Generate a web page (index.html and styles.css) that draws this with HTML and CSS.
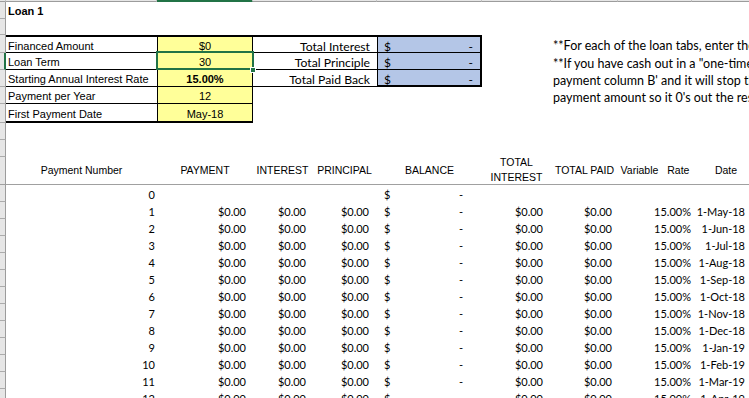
FILE: index.html
```html
<!DOCTYPE html>
<html>
<head>
<meta charset="utf-8">
<title>Loan 1</title>
<link rel="stylesheet" href="styles.css">
</head>
<body>
<div class="sheet">
  <div class="row colhead">
    <div class="hc"></div><div class="hc"></div><div class="hc sel"></div><div class="hc"></div><div class="hc"></div><div class="hc"></div><div class="hc"></div><div class="hc"></div><div class="hc"></div><div class="hc"></div>
  </div>

  <div class="row">
    <div class="rh"></div><div class="c lbl bold title">Loan 1</div>
  </div>
  <div class="row h16">
    <div class="rh"></div>
  </div>

  <div class="row h18 box-top">
    <div class="rh"></div>
    <div class="c lbl bt bb">Financed Amount</div>
    <div class="c yel bt bb">$0</div>
    <div class="c tlbl bt bb">Total Interest</div>
    <div class="c blue acc-t bt bb"><span>$</span><span>-</span></div>
    <div></div>
    <div class="c note">**For each of the loan tabs, enter the</div>
  </div>
  <div class="row">
    <div class="rh act"></div>
    <div class="c lbl bb">Loan Term</div>
    <div class="c yel bb selcell">30<span class="selbox"></span><span class="handle"></span></div>
    <div class="c tlbl bb">Total Principle</div>
    <div class="c blue acc-t bb"><span>$</span><span>-</span></div>
    <div></div>
    <div class="c note">**If you have cash out in a "one-time"</div>
  </div>
  <div class="row">
    <div class="rh"></div>
    <div class="c lbl bb">Starting Annual Interest Rate</div>
    <div class="c yel bb bold">15.00%</div>
    <div class="c tlbl bb">Total Paid Back</div>
    <div class="c blue acc-t bb2"><span>$</span><span>-</span></div>
    <div></div>
    <div class="c note">payment column B' and it will stop the</div>
  </div>
  <div class="row">
    <div class="rh"></div>
    <div class="c lbl bb">Payment per Year</div>
    <div class="c yel bb">12</div>
    <div></div><div></div><div></div>
    <div class="c note">payment amount so it 0's out the rest</div>
  </div>
  <div class="row h19">
    <div class="rh"></div>
    <div class="c lbl bb2">First Payment Date</div>
    <div class="c yel bb2">May-18</div>
  </div>
  <div class="row"><div class="rh"></div></div>
  <div class="row"><div class="rh"></div></div>

  <div class="row h28 hdr">
    <div class="rh"></div>
    <div class="hd">Payment Number</div>
    <div class="hd">PAYMENT</div>
    <div class="hd">INTEREST</div>
    <div class="hd">PRINCIPAL</div>
    <div class="hd">BALANCE</div>
    <div class="hd two">TOTAL<br>INTEREST</div>
    <div class="hd">TOTAL PAID</div>
    <div class="hd var">Variable Rate</div>
    <div class="hd">Date</div>
  </div>

  <div class="row"><div class="rh"></div><div class="c d num">0</div><div></div><div></div><div></div><div class="c d acc"><span>$</span><span>-</span></div></div>
  <div class="row"><div class="rh"></div><div class="c d num">1</div><div class="c d pb">$0.00</div><div class="c d pc">$0.00</div><div class="c d pd">$0.00</div><div class="c d acc"><span>$</span><span>-</span></div><div class="c d pf">$0.00</div><div class="c d pg">$0.00</div><div class="c d ph">15.00%</div><div class="c d pi">1-May-18</div></div>
  <div class="row"><div class="rh"></div><div class="c d num">2</div><div class="c d pb">$0.00</div><div class="c d pc">$0.00</div><div class="c d pd">$0.00</div><div class="c d acc"><span>$</span><span>-</span></div><div class="c d pf">$0.00</div><div class="c d pg">$0.00</div><div class="c d ph">15.00%</div><div class="c d pi">1-Jun-18</div></div>
  <div class="row"><div class="rh"></div><div class="c d num">3</div><div class="c d pb">$0.00</div><div class="c d pc">$0.00</div><div class="c d pd">$0.00</div><div class="c d acc"><span>$</span><span>-</span></div><div class="c d pf">$0.00</div><div class="c d pg">$0.00</div><div class="c d ph">15.00%</div><div class="c d pi">1-Jul-18</div></div>
  <div class="row"><div class="rh"></div><div class="c d num">4</div><div class="c d pb">$0.00</div><div class="c d pc">$0.00</div><div class="c d pd">$0.00</div><div class="c d acc"><span>$</span><span>-</span></div><div class="c d pf">$0.00</div><div class="c d pg">$0.00</div><div class="c d ph">15.00%</div><div class="c d pi">1-Aug-18</div></div>
  <div class="row"><div class="rh"></div><div class="c d num">5</div><div class="c d pb">$0.00</div><div class="c d pc">$0.00</div><div class="c d pd">$0.00</div><div class="c d acc"><span>$</span><span>-</span></div><div class="c d pf">$0.00</div><div class="c d pg">$0.00</div><div class="c d ph">15.00%</div><div class="c d pi">1-Sep-18</div></div>
  <div class="row"><div class="rh"></div><div class="c d num">6</div><div class="c d pb">$0.00</div><div class="c d pc">$0.00</div><div class="c d pd">$0.00</div><div class="c d acc"><span>$</span><span>-</span></div><div class="c d pf">$0.00</div><div class="c d pg">$0.00</div><div class="c d ph">15.00%</div><div class="c d pi">1-Oct-18</div></div>
  <div class="row"><div class="rh"></div><div class="c d num">7</div><div class="c d pb">$0.00</div><div class="c d pc">$0.00</div><div class="c d pd">$0.00</div><div class="c d acc"><span>$</span><span>-</span></div><div class="c d pf">$0.00</div><div class="c d pg">$0.00</div><div class="c d ph">15.00%</div><div class="c d pi">1-Nov-18</div></div>
  <div class="row"><div class="rh"></div><div class="c d num">8</div><div class="c d pb">$0.00</div><div class="c d pc">$0.00</div><div class="c d pd">$0.00</div><div class="c d acc"><span>$</span><span>-</span></div><div class="c d pf">$0.00</div><div class="c d pg">$0.00</div><div class="c d ph">15.00%</div><div class="c d pi">1-Dec-18</div></div>
  <div class="row"><div class="rh"></div><div class="c d num">9</div><div class="c d pb">$0.00</div><div class="c d pc">$0.00</div><div class="c d pd">$0.00</div><div class="c d acc"><span>$</span><span>-</span></div><div class="c d pf">$0.00</div><div class="c d pg">$0.00</div><div class="c d ph">15.00%</div><div class="c d pi">1-Jan-19</div></div>
  <div class="row"><div class="rh"></div><div class="c d num">10</div><div class="c d pb">$0.00</div><div class="c d pc">$0.00</div><div class="c d pd">$0.00</div><div class="c d acc"><span>$</span><span>-</span></div><div class="c d pf">$0.00</div><div class="c d pg">$0.00</div><div class="c d ph">15.00%</div><div class="c d pi">1-Feb-19</div></div>
  <div class="row"><div class="rh"></div><div class="c d num">11</div><div class="c d pb">$0.00</div><div class="c d pc">$0.00</div><div class="c d pd">$0.00</div><div class="c d acc"><span>$</span><span>-</span></div><div class="c d pf">$0.00</div><div class="c d pg">$0.00</div><div class="c d ph">15.00%</div><div class="c d pi">1-Mar-19</div></div>
  <div class="row"><div class="rh"></div><div class="c d num">12</div><div class="c d pb">$0.00</div><div class="c d pc">$0.00</div><div class="c d pd">$0.00</div><div class="c d acc"><span>$</span><span>-</span></div><div class="c d pf">$0.00</div><div class="c d pg">$0.00</div><div class="c d ph">15.00%</div><div class="c d pi">1-Apr-19</div></div>
</div>
</body>
</html>
```

FILE: styles.css
```css
* { box-sizing: border-box; margin: 0; padding: 0; }
html, body { width: 749px; height: 398px; overflow: hidden; background: #fff; }
body {
  font-family: "Liberation Sans", Arial, sans-serif;
  font-size: 11px;
  color: #000;
}
.sheet { width: 760px; }

.row {
  display: grid;
  grid-template-columns: 6px 151px 96px 59px 65px 105px 69px 67px 74px 68px;
  grid-template-rows: minmax(0, 1fr);
  height: 17px;
}
.row > div { white-space: nowrap; overflow: hidden; line-height: 17px; min-height: 0; }

.h16 { height: 16px; }
.h18 { height: 18px; }
.h19 { height: 19px; }
.h28 { height: 28px; }

/* column header remnant */
.colhead { height: 2px; }
.colhead .hc {
  background: #e6e6e6;
  border-bottom: 1px solid #9c9c9c;
  border-right: 1px solid #c4c4c4;
}
.colhead .hc.sel { background: #217346; border-bottom-color: #217346; }

/* row header strip */
.rh {
  background: #e6e6e6;
  border-right: 1px solid #9c9c9c;
  border-bottom: 1px solid #ababab;
}
.rh.act { border-right: 2px solid #217346; }

.bold { font-weight: bold; }
.lbl { padding-left: 2px; }
.title { padding-top: 1px; }

/* input box */
.bt { border-top: 2px solid #000; }
.bb { border-bottom: 1px solid #000; }
.bb2 { border-bottom: 2px solid #000; }
.row > .lbl.bb, .row > .yel.bb, .row > .tlbl.bb,
.row > .lbl.bb2, .row > .yel.bb2 {
  padding-top: 2px;
  line-height: 15px;
}
.h19 > .lbl.bb2, .h19 > .yel.bb2 { padding-top: 3px; }

.yel {
  background: #ffff99;
  border-left: 1px solid #000;
  border-right: 1px solid #000;
  text-align: center;
}
.row > .lbl.bb, .row > .lbl.bb2 { padding-left: 2px; }
.selcell { position: relative; overflow: visible !important; z-index: 2; }
.selbox {
  position: absolute;
  left: -2px; top: -2px; right: -2px; bottom: -1px;
  border: 2px solid #217346;
}
.handle {
  position: absolute;
  right: -4px; bottom: -4px;
  width: 6px; height: 6px;
  background: #217346;
  border: 1px solid #fff;
}

.tlbl {
  grid-column: span 2;
  text-align: right;
  padding-right: 7px;
  font-family: Lato, "Liberation Sans", sans-serif;
  font-size: 12.2px;
}
.blue {
  background: #b4c6e7;
  border-left: 1px solid #000;
  border-right: 2px solid #000;
}
.acc-t, .acc {
  display: flex;
  justify-content: space-between;
  font-family: Lato, "Liberation Sans", sans-serif;
}
.row > .acc-t { padding: 2px 7px 0 6px; line-height: 15px; font-size: 12px; }
.acc { padding: 0 19px 0 7px; }

.note {
  grid-column: 8 / span 3;
  padding-left: 2px;
  padding-top: 2px;
  font-family: Lato, "Liberation Sans", sans-serif;
  font-size: 12.5px;
}
.row > .note { line-height: 17px; }

/* table header */
.hdr > div { border-bottom: 1px solid #a0a0a0; }
.hd {
  display: flex;
  align-items: center;
  justify-content: center;
  text-align: center;
  font-size: 10.5px;
  overflow: visible !important;
}
.row > .hd { line-height: 15px; padding-bottom: 1px; }
.var { word-spacing: 6px; }

/* data */
.d {
  text-align: right;
  font-family: Lato, "Liberation Sans", sans-serif;
  padding-top: 1px;
}
.num { padding-right: 2px; }
.pb { padding-right: 7px; }
.pc { padding-right: 6px; }
.pd { padding-right: 8px; }
.pf { padding-right: 8px; }
.pg { padding-right: 6px; }
.ph { padding-right: 1px; }
.pi { padding-right: 15px; }
```
